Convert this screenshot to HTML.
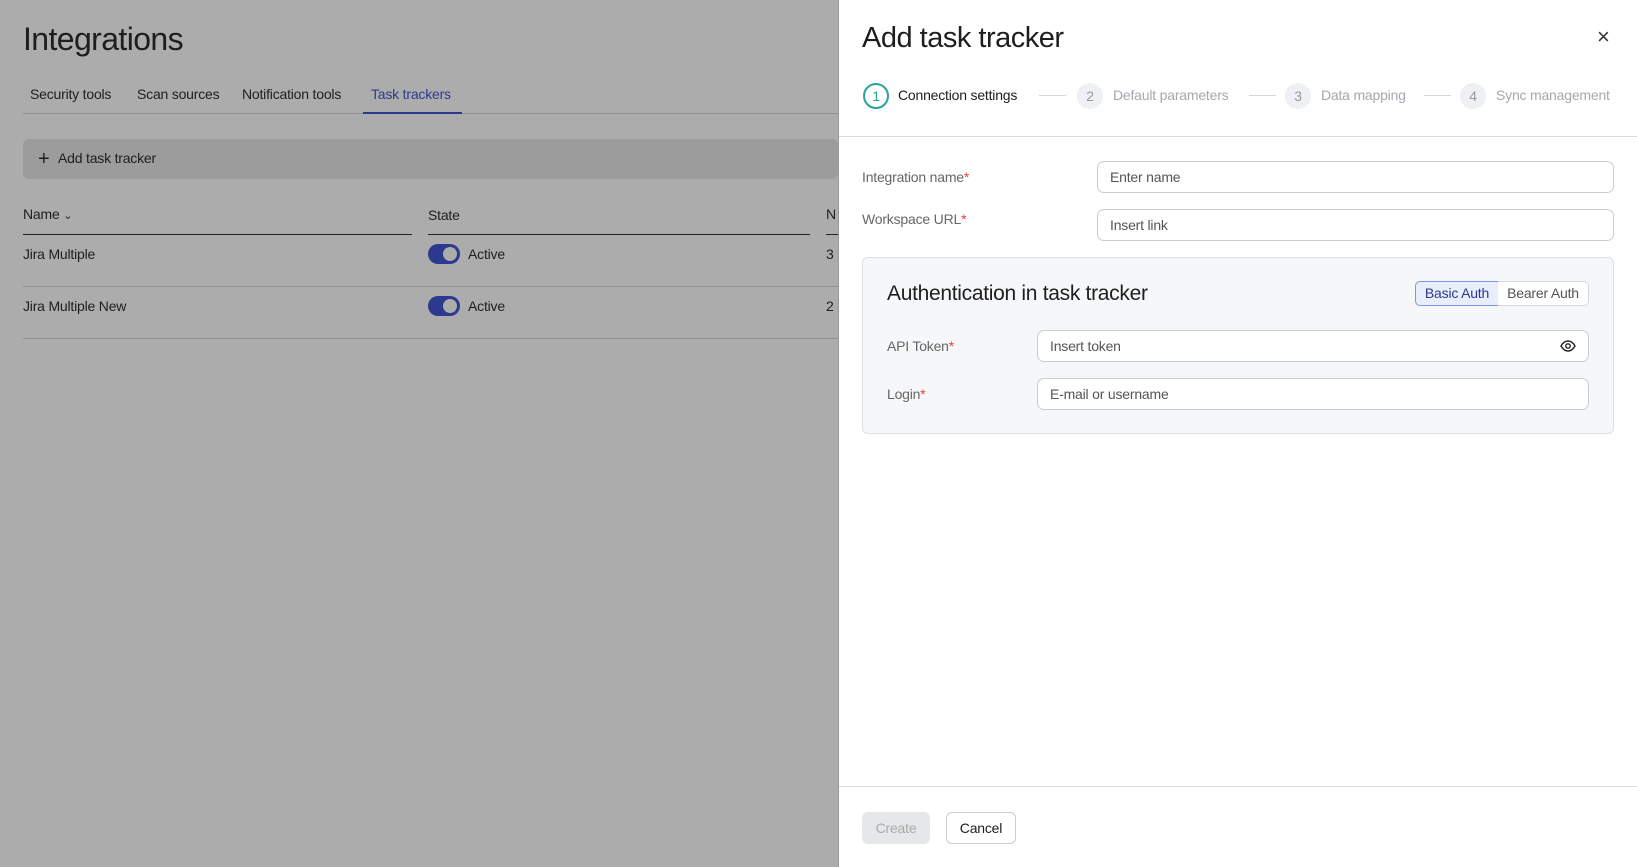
<!DOCTYPE html>
<html><head><meta charset="utf-8"><style>
*{box-sizing:border-box;margin:0;padding:0}
body{width:1637px;height:867px;overflow:hidden;background:#acacac;font-family:"Liberation Sans",sans-serif;color:#1e1e1e;position:relative;font-size:14px;letter-spacing:-0.2px}
.a{position:absolute}
.req{color:#e0453a}
.inp{position:absolute;border:1px solid #c9ccd1;border-radius:7px;background:#fff;color:#555;padding-left:12px;display:flex;align-items:center;font-size:14px}
.tg{position:absolute;width:32px;height:20px;border-radius:10px;background:#2b3a8f}
.tg:after{content:"";position:absolute;right:3px;top:3px;width:14px;height:14px;border-radius:50%;background:#acacac}
.step{position:absolute;top:83px;width:26px;height:26px;border-radius:50%;background:#eef0f3;color:#999;text-align:center;line-height:26px;font-size:14px}
.sl{position:absolute;top:95px;height:1px;background:#d5d7db;width:27px}
.st{position:absolute;top:87px;color:#a5a8ad;font-size:14px}
</style></head><body>
<div class="a" style="left:23px;top:21px;font-size:32px;letter-spacing:-0.6px">Integrations</div>
<div class="a" style="left:30px;top:86px">Security tools</div>
<div class="a" style="left:137px;top:86px">Scan sources</div>
<div class="a" style="left:242px;top:86px">Notification tools</div>
<div class="a" style="left:371px;top:86px;color:#2b3a8f">Task trackers</div>
<div class="a" style="left:23px;top:113px;width:815px;height:1px;background:#8f8f8f"></div>
<div class="a" style="left:363px;top:112px;width:99px;height:2px;background:#2b3a8f"></div>
<div class="a" style="left:23px;top:139px;width:815px;height:40px;background:#9c9c9c;border-radius:6px"></div>
<div class="a" style="left:38px;top:151px;font-size:20px;line-height:16px">+</div>
<div class="a" style="left:58px;top:150px">Add task tracker</div>
<div class="a" style="left:23px;top:206px">Name <span style="font-size:11px">⌄</span></div>
<div class="a" style="left:428px;top:207px">State</div>
<div class="a" style="left:826px;top:206px">N</div>
<div class="a" style="left:23px;top:234px;width:389px;height:1px;background:#222"></div>
<div class="a" style="left:428px;top:234px;width:382px;height:1px;background:#222"></div>
<div class="a" style="left:826px;top:234px;width:12px;height:1px;background:#222"></div>
<div class="a" style="left:23px;top:246px">Jira Multiple</div>
<div class="tg" style="left:428px;top:244px"></div>
<div class="a" style="left:468px;top:246px">Active</div>
<div class="a" style="left:826px;top:246px">3</div>
<div class="a" style="left:23px;top:286px;width:815px;height:1px;background:#929292"></div>
<div class="a" style="left:23px;top:298px">Jira Multiple New</div>
<div class="tg" style="left:428px;top:296px"></div>
<div class="a" style="left:468px;top:298px">Active</div>
<div class="a" style="left:826px;top:298px">2</div>
<div class="a" style="left:23px;top:338px;width:815px;height:1px;background:#929292"></div>

<div class="a" style="left:838px;top:0;width:799px;height:867px;background:#fff;border-left:1px solid #999"></div>
<div class="a" style="left:862px;top:22px;font-size:29px;letter-spacing:-0.5px;color:#1e1e1e">Add task tracker</div>
<div class="a" style="left:1597px;top:24px;font-size:22px;color:#333">×</div>
<div class="a" style="left:863px;top:83px;width:26px;height:26px;border-radius:50%;border:2px solid #26a69a;color:#26a69a;text-align:center;line-height:22px;font-size:14px">1</div>
<div class="a" style="left:898px;top:87px">Connection settings</div>
<div class="sl" style="left:1039px"></div>
<div class="step" style="left:1077px">2</div><div class="st" style="left:1113px">Default parameters</div>
<div class="sl" style="left:1249px"></div>
<div class="step" style="left:1285px">3</div><div class="st" style="left:1321px">Data mapping</div>
<div class="sl" style="left:1424px"></div>
<div class="step" style="left:1460px">4</div><div class="st" style="left:1496px">Sync management</div>
<div class="a" style="left:839px;top:136px;width:798px;height:1px;background:#dcdee2"></div>
<div class="a" style="left:862px;top:169px;color:#666">Integration name<span class="req">*</span></div>
<div class="inp" style="left:1097px;top:161px;width:517px;height:32px">Enter name</div>
<div class="a" style="left:862px;top:211px;color:#666">Workspace URL<span class="req">*</span></div>
<div class="inp" style="left:1097px;top:209px;width:517px;height:32px">Insert link</div>
<div class="a" style="left:862px;top:257px;width:752px;height:177px;background:#f6f7f9;border:1px solid #dcdee2;border-radius:6px"></div>
<div class="a" style="left:887px;top:282px;font-size:21px;letter-spacing:-0.3px">Authentication in task tracker</div>
<div class="a" style="left:1415px;top:281px;width:84px;height:25px;border:1px solid #7e95e6;background:#e8eefc;color:#2b3a8f;border-radius:5px 0 0 5px;text-align:center;line-height:23px">Basic Auth</div>
<div class="a" style="left:1498px;top:281px;width:91px;height:25px;border:1px solid #d5d7db;border-left:none;background:#fff;color:#555;border-radius:0 5px 5px 0;text-align:center;line-height:23px">Bearer Auth</div>
<div class="a" style="left:887px;top:338px;color:#666">API Token<span class="req">*</span></div>
<div class="inp" style="left:1037px;top:330px;width:552px;height:32px">Insert token</div>
<svg class="a" style="left:1560px;top:339px" width="16" height="14" viewBox="0 0 16 14"><path d="M1 7C3 3.5 5.5 2 8 2s5 1.5 7 5c-2 3.5-4.5 5-7 5S3 10.5 1 7z" fill="none" stroke="#222" stroke-width="1.4"/><circle cx="8" cy="7" r="2.2" fill="none" stroke="#222" stroke-width="1.4"/></svg>
<div class="a" style="left:887px;top:386px;color:#666">Login<span class="req">*</span></div>
<div class="inp" style="left:1037px;top:378px;width:552px;height:32px">E-mail or username</div>
<div class="a" style="left:839px;top:786px;width:798px;height:1px;background:#dcdee2"></div>
<div class="a" style="left:862px;top:812px;width:68px;height:32px;background:#e6e7e9;border-radius:6px;color:#aaa;text-align:center;line-height:32px">Create</div>
<div class="a" style="left:946px;top:812px;width:70px;height:32px;border:1px solid #c9ccd1;border-radius:6px;text-align:center;line-height:30px">Cancel</div>
</body></html>
